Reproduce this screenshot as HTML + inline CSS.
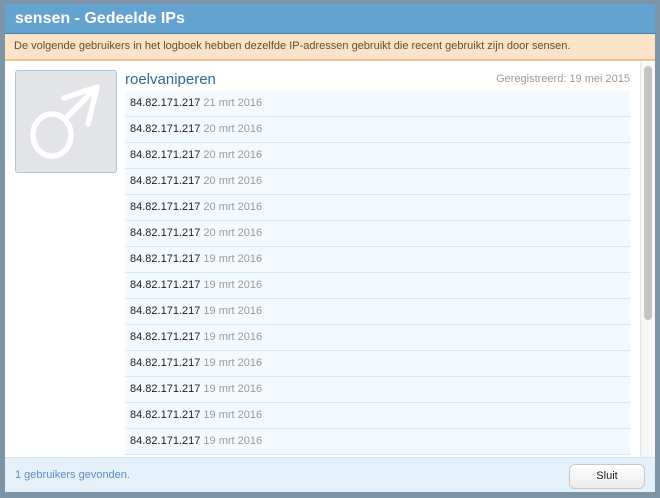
<!DOCTYPE html>
<html><head><style>
body{margin:0;width:660px;height:498px;background:#7d93a6;font-family:"Liberation Sans",sans-serif;position:relative;overflow:hidden}
.dlg{position:absolute;left:5px;top:4px;width:650px;height:488px;background:#fff;overflow:hidden}
.hd{height:29px;background:#64a3d0;border-bottom:1px solid #3f7aa8;color:#fff;font-weight:bold;font-size:16px;line-height:29px;padding-left:10px}
.nt{height:25px;background:#fbe3c8;border-bottom:2px solid #f0c48e;color:#6b4a2b;font-size:11px;line-height:25px;padding-left:9px}
.av{position:absolute;left:10px;top:66px;width:102px;height:103px;border:1px solid #a9c8e3;border-radius:3px;background:#e2e4e8;box-sizing:border-box}
.un{position:absolute;left:120px;top:67px;font-size:15px;color:#2b6a9d}
.rg{position:absolute;right:25px;top:69px;font-size:11px;color:#9a9a9a}
.rows{position:absolute;left:120px;top:87px;width:505px}
.r{height:25px;border-bottom:1px solid #d3e8f8;background:#f4f9fd;font-size:11px;line-height:25px;padding-left:5px;color:#222}
.r span{color:#999}
.sb{position:absolute;left:635px;top:58px;width:15px;height:395px;background:#f7f7f7;border-left:1px solid #e5e5e5}
.sb div{position:absolute;left:3px;top:4px;width:8px;height:254px;background:#c4c4c4;border-radius:4px}
.ft{position:absolute;left:0;top:453px;width:650px;height:35px;background:#e4f1fb;border-top:1px solid #d3e5f3}
.ft .c{position:absolute;left:10px;top:11px;font-size:11px;color:#5a8fbf}
.bt{position:absolute;left:564px;top:6px;width:74px;height:23px;border:1px solid #c9c9c9;border-radius:6px;background:linear-gradient(#fff,#ececec);font-size:11px;text-align:center;line-height:23px;color:#222}
</style></head><body>
<div class="dlg">
<div class="hd">sensen - Gedeelde IPs</div>
<div class="nt">De volgende gebruikers in het logboek hebben dezelfde IP-adressen gebruikt die recent gebruikt zijn door sensen.</div>
<div class="av"><svg width="100" height="101" viewBox="0 0 100 101"><g fill="none" stroke="#fff" stroke-width="5.5" stroke-linecap="round" stroke-linejoin="round"><ellipse cx="36" cy="64" rx="19" ry="21"/><path d="M50 47 L80 17 M48 27 L81 16 L72 53"/></g></svg></div>
<div class="un">roelvaniperen</div>
<div class="rg">Geregistreerd: 19 mei 2015</div>
<div class="rows">
<div class="r">84.82.171.217 <span>21 mrt 2016</span></div>
<div class="r">84.82.171.217 <span>20 mrt 2016</span></div>
<div class="r">84.82.171.217 <span>20 mrt 2016</span></div>
<div class="r">84.82.171.217 <span>20 mrt 2016</span></div>
<div class="r">84.82.171.217 <span>20 mrt 2016</span></div>
<div class="r">84.82.171.217 <span>20 mrt 2016</span></div>
<div class="r">84.82.171.217 <span>19 mrt 2016</span></div>
<div class="r">84.82.171.217 <span>19 mrt 2016</span></div>
<div class="r">84.82.171.217 <span>19 mrt 2016</span></div>
<div class="r">84.82.171.217 <span>19 mrt 2016</span></div>
<div class="r">84.82.171.217 <span>19 mrt 2016</span></div>
<div class="r">84.82.171.217 <span>19 mrt 2016</span></div>
<div class="r">84.82.171.217 <span>19 mrt 2016</span></div>
<div class="r">84.82.171.217 <span>19 mrt 2016</span></div>
</div>
<div class="sb"><div></div></div>
<div class="ft"><div class="c">1 gebruikers gevonden.</div><div class="bt">Sluit</div></div>
</div>
</body></html>
